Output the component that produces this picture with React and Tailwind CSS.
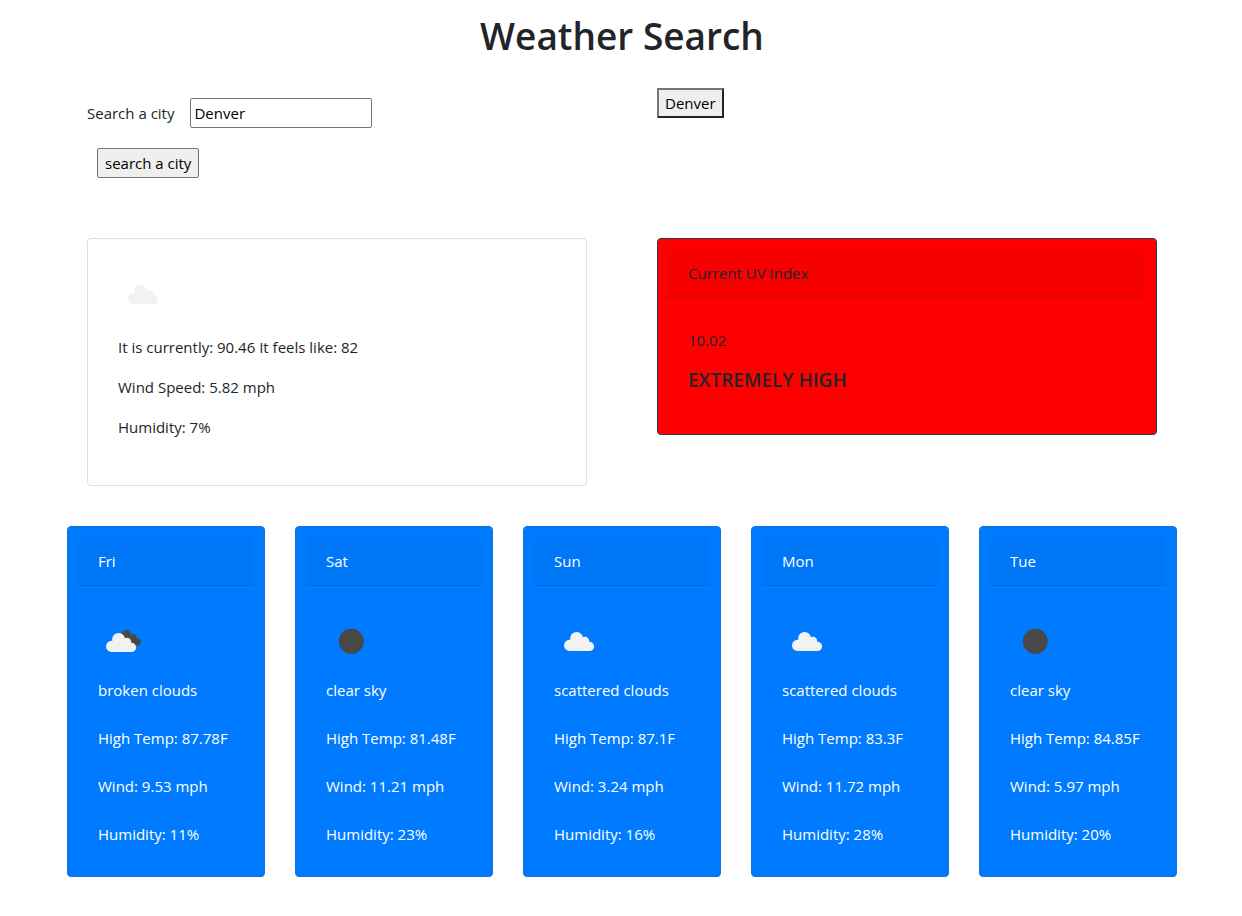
import { useState } from "react";

const forecast = [
  { day: "Fri", icon: "broken", sky: "broken clouds", temp: "87.78F", wind: "9.53 mph", humidity: "11%" },
  { day: "Sat", icon: "clear", sky: "clear sky", temp: "81.48F", wind: "11.21 mph", humidity: "23%" },
  { day: "Sun", icon: "cloud", sky: "scattered clouds", temp: "87.1F", wind: "3.24 mph", humidity: "16%" },
  { day: "Mon", icon: "cloud", sky: "scattered clouds", temp: "83.3F", wind: "11.72 mph", humidity: "28%" },
  { day: "Tue", icon: "clear", sky: "clear sky", temp: "84.85F", wind: "5.97 mph", humidity: "20%" },
];

function Cloud() {
  return (
    <g fill="#f2f2f2">
      <circle cx="15.6" cy="29.4" r="5.6" />
      <circle cx="22.6" cy="22.4" r="6.4" />
      <circle cx="31" cy="25" r="4.2" />
      <circle cx="35.5" cy="30.4" r="4.6" />
      <path d="M15.6 23.8h15.4l4.5 2v9.2H15.6z" />
    </g>
  );
}

function WeatherIcon({ kind }) {
  return (
    <svg className="size-[50px]" viewBox="0 0 50 50" aria-hidden="true">
      {kind === "clear" && <circle cx="25.3" cy="25.3" r="12.5" fill="#484848" />}
      {kind === "cloud" && <Cloud />}
      {kind === "broken" && (
        <>
          <g fill="#484848">
            <circle cx="28.3" cy="18.9" r="4.9" />
            <circle cx="35.2" cy="21.6" r="3.6" />
            <circle cx="39.2" cy="26" r="3.8" />
            <path d="M28 18l7 1 5 6-2 4.7-8-2z" />
          </g>
          <g transform="translate(-2 1)">
            <Cloud />
          </g>
        </>
      )}
    </svg>
  );
}

function DayCard({ day, icon, sky, temp, wind, humidity }) {
  return (
    <article className="rounded border border-[#1271dc] bg-[#007bff] p-2.5 text-white">
      <h2 className="rounded-t-[3px] border-b border-black/12 bg-black/3 px-5 py-3">{day}</h2>
      <div className="px-5 pt-[30px] pb-5">
        <WeatherIcon kind={icon} />
        <div className="mt-3 space-y-6">
          <p>{sky}</p>
          <p>High Temp: {temp}</p>
          <p>Wind: {wind}</p>
          <p>Humidity: {humidity}</p>
        </div>
      </div>
    </article>
  );
}

export default function App() {
  const [city, setCity] = useState("Denver");

  return (
    <div className="bg-white pt-3 pr-[65px] pb-10 pl-[67px] font-['Segoe_UI','Open_Sans',sans-serif] text-[15px] leading-6 text-[#212529]">
      <h1 className="text-center text-[37px] leading-[48px] font-semibold">Weather Search</h1>

      <main>
        <div className="grid grid-cols-2 gap-x-[70px] px-5 pt-7">
          <form className="pt-2.5" onSubmit={(e) => e.preventDefault()}>
            <div className="flex items-center gap-4">
              <label htmlFor="city">Search a city</label>
              <input
                id="city"
                type="text"
                value={city}
                onChange={(e) => setCity(e.target.value)}
                className="h-[30px] w-[182px] rounded-xs border border-[#767676] px-[3px] text-black"
              />
            </div>
            <button
              type="submit"
              className="mt-5 ml-2.5 h-[30px] rounded-xs border border-[#767676] bg-[#efefef] px-[7px] text-black"
            >
              search a city
            </button>
          </form>
          <div>
            <button
              type="button"
              className="h-[30px] border-2 border-t-[#767676] border-r-[#212529] border-b-[#212529] border-l-[#767676] bg-[#efefef] px-1.5 text-black"
            >
              Denver
            </button>
          </div>
        </div>

        <div className="mt-[60px] grid grid-cols-2 items-start gap-x-[70px] px-5">
          <section className="rounded border border-[#dfdfdf] px-[30px] pt-[30px] pb-[46px]">
            <WeatherIcon kind="cloud" />
            <div className="mt-4 space-y-4">
              <p>It is currently: 90.46 It feels like: 82</p>
              <p>Wind Speed: 5.82 mph</p>
              <p>Humidity: 7%</p>
            </div>
          </section>
          <section className="rounded border border-[#343a40] bg-[#ff0000] p-2.5">
            <h2 className="rounded-t-[3px] border-b border-black/12 bg-black/3 px-5 py-3">Current UV Index</h2>
            <div className="space-y-4 px-5 pt-[30px] pb-8">
              <p>10.02</p>
              <p className="text-[19px] font-semibold">EXTREMELY HIGH</p>
            </div>
          </section>
        </div>

        <section className="mt-10 grid grid-cols-5 gap-[30px]">
          {forecast.map((item) => (
            <DayCard key={item.day} {...item} />
          ))}
        </section>
      </main>
    </div>
  );
}
